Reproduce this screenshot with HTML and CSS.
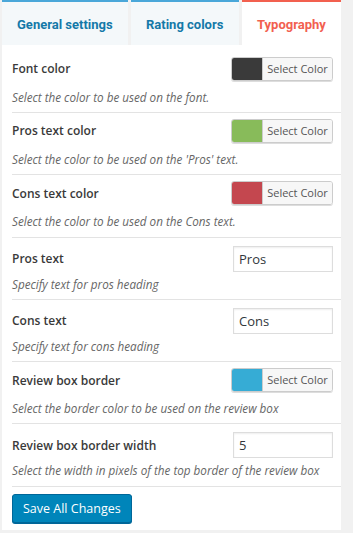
FILE: index.html
```html
<!DOCTYPE html>
<html lang="en">
<head>
  <meta charset="UTF-8">
  <title>Typography settings</title>
  <link rel="stylesheet" href="styles.css">
</head>
<body>
  <div id="ustawienia">
    <div class="tabs">
      <span class="tab">General settings</span>
      <span class="tab">Rating colors</span>
      <span class="tab active">Typography</span>
    </div>
    <div class="panel">
      <div class="row">
        <div class="top">
          <span class="label">Font color</span>
          <span class="picker"><span class="swatch dark"></span><span class="pick">Select Color</span></span>
        </div>
        <div class="desc">Select the color to be used on the font.</div>
      </div>
      <div class="row">
        <div class="top">
          <span class="label">Pros text color</span>
          <span class="picker"><span class="swatch green"></span><span class="pick">Select Color</span></span>
        </div>
        <div class="desc">Select the color to be used on the 'Pros' text.</div>
      </div>
      <div class="row">
        <div class="top">
          <span class="label">Cons text color</span>
          <span class="picker"><span class="swatch red"></span><span class="pick">Select Color</span></span>
        </div>
        <div class="desc">Select the color to be used on the Cons text.</div>
      </div>
      <div class="row tekst">
        <div class="top">
          <span class="label">Pros text</span>
          <input class="field" type="text" value="Pros">
        </div>
        <div class="desc">Specify text for pros heading</div>
      </div>
      <div class="row tekst">
        <div class="top">
          <span class="label">Cons text</span>
          <input class="field" type="text" value="Cons">
        </div>
        <div class="desc">Specify text for cons heading</div>
      </div>
      <div class="row">
        <div class="top">
          <span class="label">Review box border</span>
          <span class="picker"><span class="swatch blue"></span><span class="pick">Select Color</span></span>
        </div>
        <div class="desc">Select the border color to be used on the review box</div>
      </div>
      <div class="row tekst">
        <div class="top">
          <span class="label">Review box border width</span>
          <input class="field" type="text" value="5">
        </div>
        <div class="desc">Select the width in pixels of the top border of the review box</div>
      </div>
      <div class="zapisz">
        <button class="save">Save All Changes</button>
      </div>
    </div>
  </div>
</body>
</html>
```

FILE: styles.css
```css
body {
  background-color: #f1f1f1;
  margin: 0;
  padding: 0;
  font-family: 'Open Sans', sans-serif;
  color: #23282d;
}

#ustawienia {
  width: 339px;
  margin-left: 2px;
}

.tabs {
  display: flex;
  gap: 3px;
  height: 45px;
}

.tab {
  display: flex;
  align-items: center;
  padding: 2px 15px 0 15px;
  background-color: #f4f8fa;
  border-top: 2px solid #4aa7d9;
  font-family: Roboto, sans-serif;
  font-weight: bold;
  font-size: 13px;
  color: #1479a8;
  box-sizing: border-box;
}

.tab:first-child {
  width: 126px;
}

.tab:nth-child(2) {
  width: 108px;
}

.tab.active {
  flex: 1;
  background-color: #fff;
  border-top-color: #f2604f;
  color: #f2604f;
}

.panel {
  background-color: #fff;
  padding: 5.7px 0 7px 10px;
}

.row {
  border-bottom: 1px solid #e3e3e3;
  padding: 5px 0 7.3px 0;
}

.top {
  display: flex;
  justify-content: space-between;
  align-items: center;
  padding-right: 8px;
  height: 26px;
}

.tekst .top {
  margin-top: 3px;
}

.tekst .desc {
  margin-top: 4px;
}

.label {
  font-size: 12px;
  font-weight: 600;
  color: #3a3a3a;
}

.desc {
  font-size: 11.7px;
  line-height: 16px;
  font-style: italic;
  color: #666;
  margin-top: 7px;
}

.picker {
  display: flex;
  width: 102px;
  height: 24px;
  border: 1px solid #ccc;
  border-radius: 3px;
  overflow: hidden;
  box-sizing: border-box;
  box-shadow: 0 1px 0 #ddd;
}

.swatch {
  width: 30px;
}

.dark { background-color: #3a3a3a; }
.green { background-color: #88bb5a; }
.red { background-color: #c4474f; }
.blue { background-color: #36acd5; }

.pick {
  flex: 1;
  background-color: #f7f7f7;
  border-left: 1px solid #ccc;
  font-size: 11px;
  color: #555;
  line-height: 22px;
  text-align: center;
}

.field {
  width: 100px;
  height: 26px;
  border: 1px solid #ddd;
  box-sizing: border-box;
  padding: 0 5px;
  font-family: 'Open Sans', sans-serif;
  font-size: 13px;
  color: #32373c;
  box-shadow: inset 0 1px 2px rgba(0, 0, 0, 0.07);
}

.zapisz {
  padding-top: 7px;
}

.save {
  background-color: #0085ba;
  border: 1px solid #006799;
  border-radius: 3px;
  color: #fff;
  font-family: 'Open Sans', sans-serif;
  font-size: 12.5px;
  height: 29px;
  padding: 0 10px;
  box-shadow: 0 1px 0 #006799;
}
```
